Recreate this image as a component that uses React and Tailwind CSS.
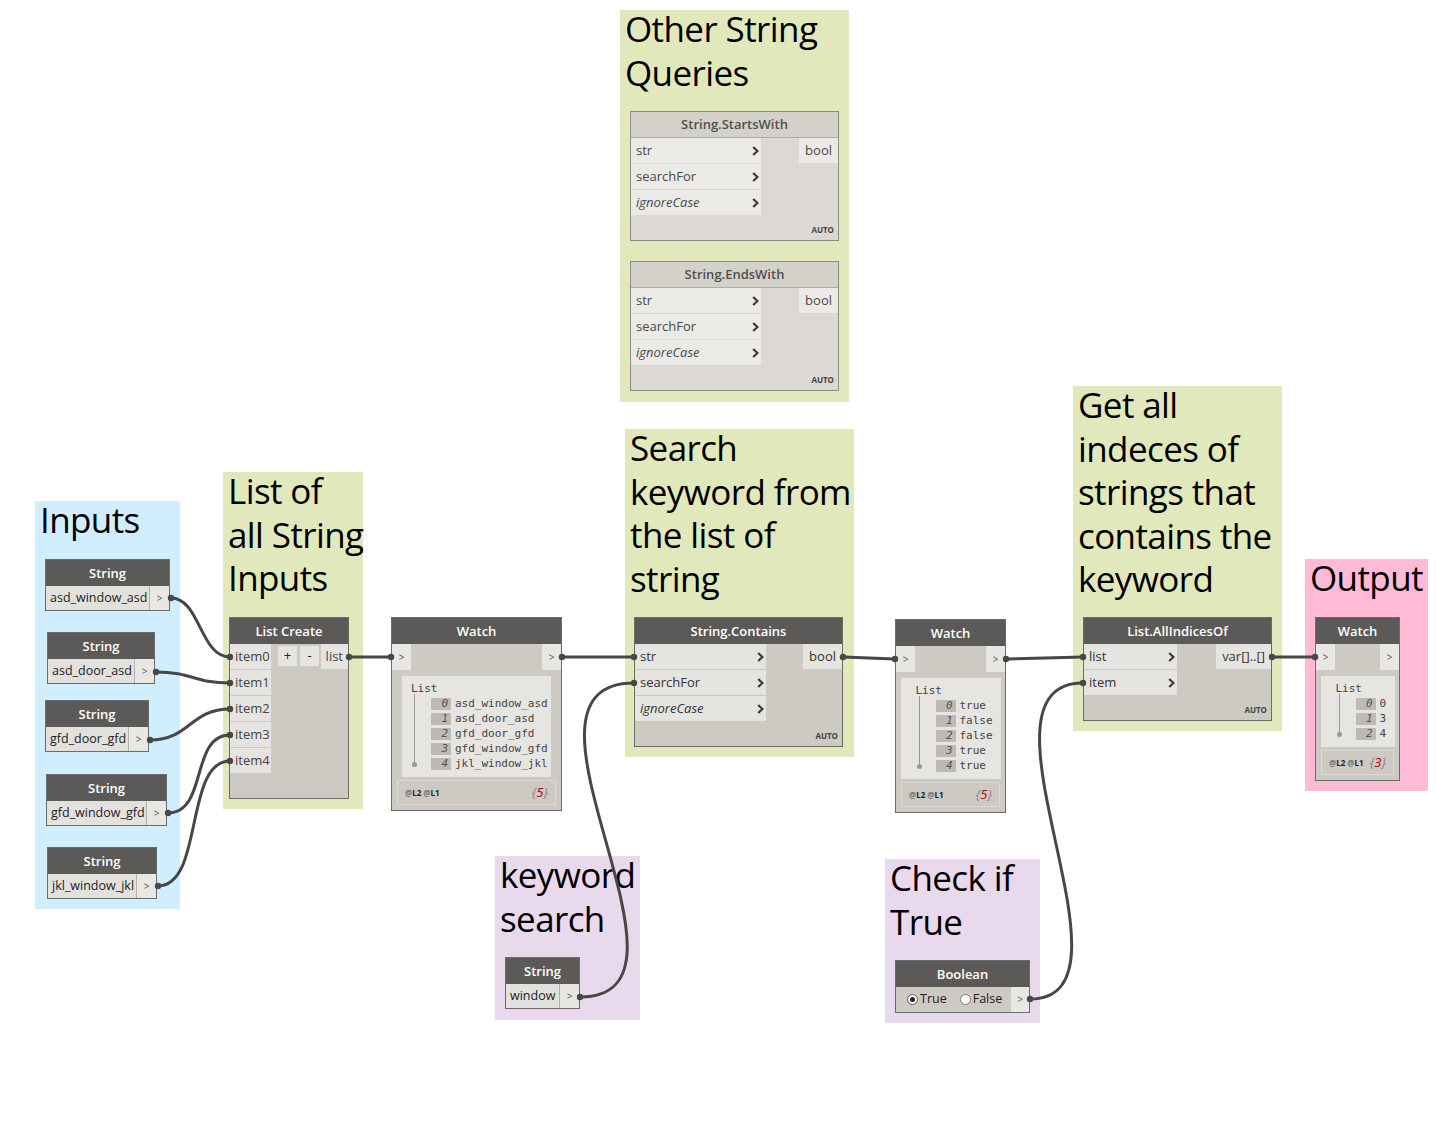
import React from 'react'

const groups = [
  { x: 35, y: 501, w: 145, h: 408, bg: 'bg-[#d0eefe]', lines: ['Inputs'] },
  { x: 223, y: 472, w: 140, h: 337, bg: 'bg-[#e1e9bc]', lines: ['List of', 'all String', 'Inputs'] },
  { x: 620, y: 10, w: 229, h: 392, bg: 'bg-[#e1e9bc]', lines: ['Other String', 'Queries'] },
  { x: 625, y: 429, w: 229, h: 328, bg: 'bg-[#e1e9bc]', lines: ['Search', 'keyword from', 'the list of', 'string'] },
  { x: 1073, y: 386, w: 209, h: 345, bg: 'bg-[#e1e9bc]', lines: ['Get all', 'indeces of', 'strings that', 'contains the', 'keyword'] },
  { x: 1305, y: 559, w: 123, h: 232, bg: 'bg-[#ffbad6]', lines: ['Output'] },
  { x: 495, y: 856, w: 145, h: 164, bg: 'bg-[#e8d9ec]', lines: ['keyword', 'search'] },
  { x: 885, y: 859, w: 155, h: 164, bg: 'bg-[#e8d9ec]', lines: ['Check if', 'True'] },
]

const strings = [
  { x: 45, y: 559, w: 125, value: 'asd_window_asd' },
  { x: 47, y: 632, w: 108, value: 'asd_door_asd' },
  { x: 45, y: 700, w: 104, value: 'gfd_door_gfd' },
  { x: 46, y: 774, w: 121, value: 'gfd_window_gfd' },
  { x: 47, y: 847, w: 110, value: 'jkl_window_jkl' },
  { x: 505, y: 957, w: 75, value: 'window' },
]

const wires = [
  'M171,598 C200,598 200,657 230,657',
  'M156,672 C193,672 193,683 230,683',
  'M150,740 C190,740 190,709 230,709',
  'M168,813 C208,813 190,735 230,735',
  'M158,886 C204,886 184,761 230,761',
  'M349,657 L391,657',
  'M562,657 L634,657',
  'M580,997 C720,997 490,683 634,683',
  'M843,657 L895,659',
  'M1006,659 L1083,657',
  'M1030,999 C1150,999 960,683 1083,683',
  'M1272,657 L1315,657',
]

const knobs = [
  [171, 598], [156, 672], [150, 740], [168, 813], [158, 886],
  [230, 657], [230, 683], [230, 709], [230, 735], [230, 761],
  [349, 657], [391, 657], [562, 657], [634, 657], [634, 683], [580, 997],
  [843, 657], [895, 659], [1006, 659], [1083, 657], [1083, 683], [1030, 999],
  [1272, 657], [1315, 657],
]

function Chevron() {
  return (
    <svg width="7" height="10" viewBox="0 0 7 10" className="shrink-0">
      <polyline points="1.2,1 5.4,5 1.2,9" fill="none" stroke="#3a3a3a" strokeWidth="2.2" />
    </svg>
  )
}

function Group({ x, y, w, h, bg, lines }) {
  return (
    <div className={`absolute ${bg}`} style={{ left: x, top: y, width: w, height: h }}>
      <div className="pl-[5px] -mt-[3px] text-[35px] leading-[43.5px] tracking-[-0.6px] text-black whitespace-nowrap">
        {lines.map(l => <div key={l}>{l}</div>)}
      </div>
    </div>
  )
}

function Header({ title, light }) {
  return (
    <div className={`h-[26px] shrink-0 flex items-center justify-center pt-[1px] text-[13px] font-semibold
      ${light ? 'bg-[#d4d1cb] text-[#505050] border-b border-[#aeaba6]' : 'bg-[#5c5a58] text-white'}`}>
      {title}
    </div>
  )
}

function StringNode({ x, y, w, value }) {
  return (
    <div className="absolute border border-[#6d6b69] bg-[#cdc9c3]" style={{ left: x, top: y, width: w }}>
      <Header title="String" />
      <div className="flex h-[24px] text-[12.5px] text-[#222]">
        <div className="flex-1 flex items-center pl-[4px] bg-[#e3e1dd] border-r border-[#b3b0ab]">{value}</div>
        <div className="w-[19px] flex items-center justify-center bg-[#e8e7e4] text-[10px] text-[#555]">&gt;</div>
      </div>
    </div>
  )
}

function FnNode({ x, y, w, h, title, inputs, output, inW, light }) {
  return (
    <div className={`absolute flex flex-col border ${light ? 'border-[#8d8b87] bg-[#dcd9d4]' : 'border-[#6d6b69] bg-[#cdc9c3]'}`}
      style={{ left: x, top: y, width: w, height: h }}>
      <Header title={title} light={light} />
      <div className="flex flex-1 justify-between text-[13px]">
        <div className="flex flex-col" style={{ width: inW }}>
          {inputs.map(p => (
            <div key={p} className={`h-[26px] flex items-center justify-between pl-[5px] pr-[2px] pt-[1px] border-b
              ${light ? 'bg-[#ebeae7] border-[#d9d7d2] text-[#4a4a4a]' : 'bg-[#e6e4e0] border-[#cbc8c2] text-[#333]'}`}>
              <span className={p === 'ignoreCase' ? 'italic' : ''}>{p}</span>
              <Chevron />
            </div>
          ))}
        </div>
        <div className="flex flex-col items-end justify-between">
          <div className={`h-[25px] px-[6px] pt-[1px] flex items-center ${light ? 'bg-[#ebeae7] text-[#4a4a4a]' : 'bg-[#e6e4e0] text-[#333]'}`}>{output}</div>
          <div className="pr-[4px] pb-[4px] text-[8px] font-bold text-[#444]">AUTO</div>
        </div>
      </div>
    </div>
  )
}

function ListCreate() {
  return (
    <div className="absolute left-[229px] top-[617px] w-[120px] h-[182px] flex flex-col border border-[#6d6b69] bg-[#cdc9c3]">
      <Header title="List Create" />
      <div className="flex text-[13px] text-[#444]">
        <div className="w-[41px] flex flex-col">
          {['item0', 'item1', 'item2', 'item3', 'item4'].map(i => (
            <div key={i} className="h-[26px] flex items-center pl-[5px] pt-[1px] bg-[#e6e4e0] border-b border-[#cbc8c2]">{i}</div>
          ))}
        </div>
        <div className="flex gap-[3px] ml-[7px] mt-[2px] h-[20px]">
          <div className="w-[19px] flex items-center justify-center bg-[#e6e4e0] text-[#222]">+</div>
          <div className="w-[19px] flex items-center justify-center bg-[#e6e4e0] text-[#222]">-</div>
        </div>
        <div className="ml-auto h-[25px] px-[5px] pt-[1px] flex items-center bg-[#e6e4e0]">list</div>
      </div>
    </div>
  )
}

function WatchNode({ x, y, w, h, items, count, panelW, panelH, indent }) {
  return (
    <div className="absolute flex flex-col border border-[#6d6b69] bg-[#cdc9c3]" style={{ left: x, top: y, width: w, height: h }}>
      <Header title="Watch" />
      <div className="flex justify-between h-[26px] text-[10px] text-[#555]">
        <div className="w-[19px] flex items-center justify-center bg-[#e8e7e4]">&gt;</div>
        <div className="w-[19px] flex items-center justify-center bg-[#e8e7e4]">&gt;</div>
      </div>
      <div className="mt-[6px] self-center bg-[#e6e5e1] font-['DejaVu_Sans_Mono',monospace] text-[11px] text-[#444] leading-[15px]"
        style={{ width: panelW, height: panelH, paddingLeft: indent }}>
        <div className="pt-[5px]">List</div>
        <div className="flex pl-[3px]">
          <div className="relative w-[1px] bg-[#9a9894] mt-[-2px] mb-[7px]">
            <div className="absolute -left-[2px] -bottom-[3px] w-[5px] h-[5px] rounded-full bg-[#9a9894]" />
          </div>
          <div className="flex flex-col pl-[16px]">
            {items.map(([i, v]) => (
              <div key={i} className="flex items-center h-[15px]">
                <span className="w-[20px] h-[12px] leading-[12px] pr-[3px] text-right italic bg-[#bdbab5] text-[#555]">{i}</span>
                <span className="pl-[4px]">{v}</span>
              </div>
            ))}
          </div>
        </div>
      </div>
      <div className="mt-[3px] mx-[5px] h-[25px] flex items-center justify-between px-[7px] border border-[#dcdad5] bg-[#cdc9c3]">
        <span className="text-[8px] font-bold text-[#222]"><span className="text-[#777]">@</span>L2 <span className="text-[#777]">@</span>L1</span>
        <span className="italic text-[13px] text-[#888]">{'{'}<span className="text-[#b00000]">{count}</span>{'}'}</span>
      </div>
    </div>
  )
}

function BooleanNode() {
  return (
    <div className="absolute left-[895px] top-[960px] w-[135px] border border-[#6d6b69] bg-[#cdc9c3]">
      <Header title="Boolean" />
      <div className="flex h-[25px] text-[12.5px] text-[#222]">
        <div className="flex-1 flex items-center pl-[11px] gap-[13px]">
          <label className="flex items-center gap-[2px]">
            <span className="w-[11px] h-[11px] rounded-full border border-[#555] bg-white flex items-center justify-center">
              <span className="w-[5px] h-[5px] rounded-full bg-[#222]" />
            </span>
            True
          </label>
          <label className="flex items-center gap-[2px]">
            <span className="w-[11px] h-[11px] rounded-full border border-[#777] bg-white" />
            False
          </label>
        </div>
        <div className="w-[18px] flex items-center justify-center bg-[#e8e7e4] text-[10px] text-[#555]">&gt;</div>
      </div>
    </div>
  )
}

export default function App() {
  return (
    <div className="relative w-[1436px] h-[1126px] bg-white overflow-hidden font-['Open_Sans','Noto_Sans',sans-serif]">
      {groups.map(g => <Group key={g.lines.join()} {...g} />)}

      <svg className="absolute inset-0" width="1436" height="1126">
        {wires.map(d => <path key={d} d={d} fill="none" stroke="#474747" strokeWidth="3" />)}
      </svg>

      {strings.map(s => <StringNode key={s.value} {...s} />)}

      <FnNode x={630} y={111} w={209} h={130} title="String.StartsWith" light
        inputs={['str', 'searchFor', 'ignoreCase']} output="bool" inW={130} />
      <FnNode x={630} y={261} w={209} h={130} title="String.EndsWith" light
        inputs={['str', 'searchFor', 'ignoreCase']} output="bool" inW={130} />
      <FnNode x={634} y={617} w={209} h={130} title="String.Contains"
        inputs={['str', 'searchFor', 'ignoreCase']} output="bool" inW={131} />
      <FnNode x={1083} y={617} w={189} h={104} title="List.AllIndicesOf"
        inputs={['list', 'item']} output="var[]..[]" inW={93} />

      <ListCreate />

      <WatchNode x={391} y={617} w={171} h={194} count={5} panelW={149} panelH={101} indent={9}
        items={[['0', 'asd_window_asd'], ['1', 'asd_door_asd'], ['2', 'gfd_door_gfd'], ['3', 'gfd_window_gfd'], ['4', 'jkl_window_jkl']]} />
      <WatchNode x={895} y={619} w={111} h={194} count={5} panelW={100} panelH={101} indent={15}
        items={[['0', 'true'], ['1', 'false'], ['2', 'false'], ['3', 'true'], ['4', 'true']]} />
      <WatchNode x={1315} y={617} w={85} h={164} count={3} panelW={74} panelH={71} indent={15}
        items={[['0', '0'], ['1', '3'], ['2', '4']]} />

      <BooleanNode />

      <svg className="absolute inset-0 pointer-events-none" width="1436" height="1126">
        {knobs.map(([x, y]) => <circle key={`${x}-${y}`} cx={x} cy={y} r="3.2" fill="#474747" />)}
      </svg>
    </div>
  )
}
